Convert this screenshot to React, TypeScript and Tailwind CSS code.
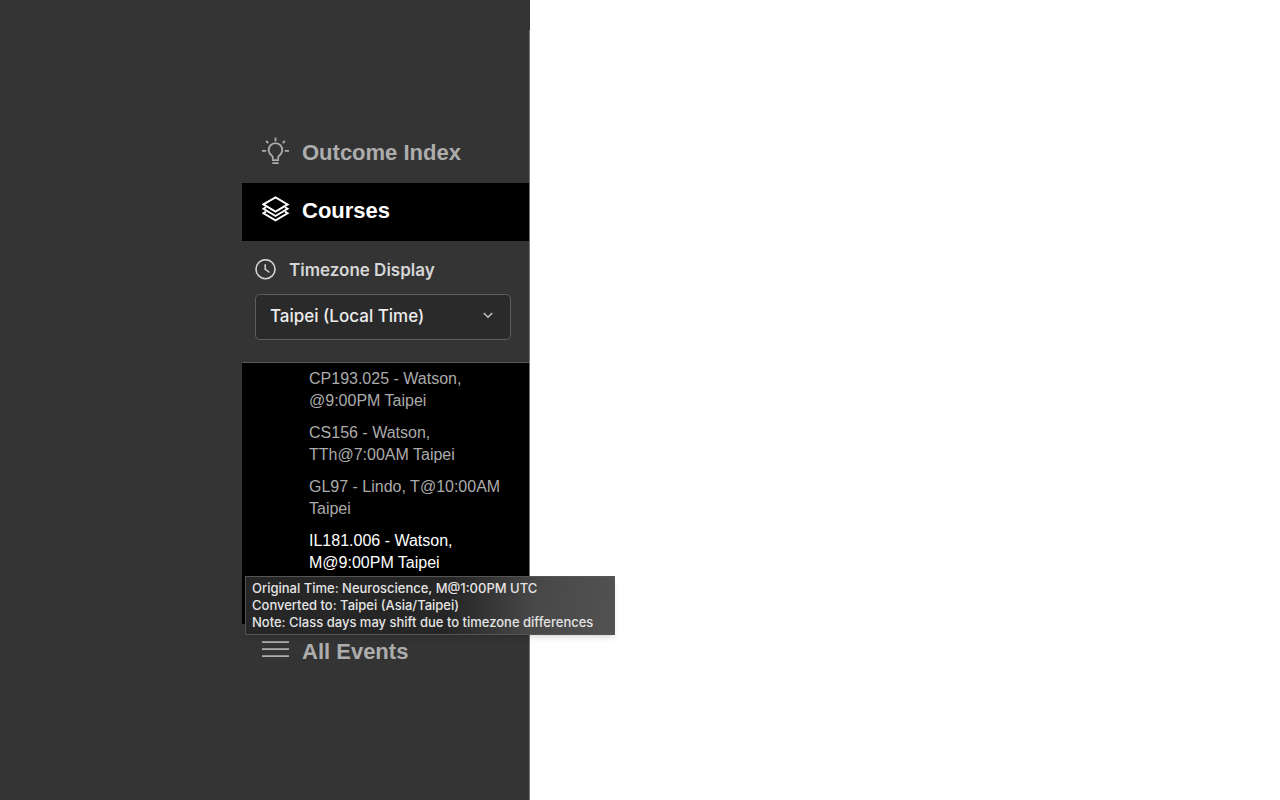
import React from "react";

const courses = [
  { name: "CP193.025 - Watson, @9:00PM Taipei" },
  { name: "CS156 - Watson, TTh@7:00AM Taipei" },
  { name: "GL97 - Lindo, T@10:00AM Taipei" },
  { name: "IL181.006 - Watson, M@9:00PM Taipei", active: true },
];

function BulbIcon() {
  return (
    <svg aria-hidden="true" className="size-7 shrink-0" viewBox="0 0 28 28" fill="none" stroke="currentColor" strokeWidth="1.8">
      <path d="M13.5.6v3.6M4.2 3.8l2 2.4M22.8 3.8l-2 2.4M0 13.8h4.2M22.8 13.8H27" />
      <path d="M10.8 22.4v-2.2c0-.8-.5-1.3-1.2-1.8a6.8 6.8 0 1 1 7.8 0c-.7.5-1.2 1-1.2 1.8v2.2" />
      <path d="M10 23.2h7M10.4 26.2h6.2" />
    </svg>
  );
}

function LayersIcon() {
  return (
    <svg aria-hidden="true" className="size-7 shrink-0" viewBox="0 0 28 28" fill="none" stroke="currentColor" strokeWidth="1.9">
      <path d="M13.5 2.4 25.6 9.4 13.5 16.6 1.4 9.4z" />
      <path d="M4 12.2 1.4 13.8l12.1 7.2 12.1-7.2-2.6-1.6" />
      <path d="M4 16.6 1.4 18.2l12.1 7.2 12.1-7.2-2.6-1.6" />
    </svg>
  );
}

function MenuIcon() {
  return (
    <svg aria-hidden="true" className="size-7 shrink-0" viewBox="0 0 28 28" fill="none" stroke="currentColor" strokeWidth="1.8">
      <path d="M0 6.2h27M0 13.2h27M0 20.2h27" />
    </svg>
  );
}

function ClockIcon() {
  return (
    <svg aria-hidden="true" className="size-[22px] shrink-0" viewBox="0 0 22 22" fill="none" stroke="currentColor" strokeWidth="1.6">
      <circle cx="10.5" cy="10.2" r="9.5" />
      <path d="M10.2 5.8v4.6l3.8 2.6" strokeLinecap="round" strokeWidth="1.5" />
    </svg>
  );
}

function NavLink({ icon, label, active }: { icon: React.ReactNode; label: string; active?: boolean }) {
  return (
    <a
      href="#"
      className={
        active
          ? "flex h-[58px] items-start gap-3 bg-black px-5 pt-3 text-[22px] font-bold leading-8 text-white"
          : "flex h-[58px] items-start gap-3 px-5 pt-3 text-[22px] font-bold leading-8 text-[#adadad]"
      }
    >
      {icon}
      <span>{label}</span>
    </a>
  );
}

export default function App() {
  return (
    <div className="flex min-h-screen bg-white font-['Liberation_Sans',Arial,sans-serif]">
      <aside className="flex w-[530px] shrink-0 flex-col bg-[#343434] pt-[30px]">
        <nav className="grow border-r border-[#777777] pl-[242px] pt-[95px]">
          <NavLink icon={<BulbIcon />} label="Outcome Index" />
          <NavLink icon={<LayersIcon />} label="Courses" active />
          <div className="border-b border-[#5a5a5a] px-[13px] pb-[22px] pt-[18px] font-['Inter',sans-serif]">
            <label htmlFor="timezone" className="flex items-center gap-3 text-[17px] font-semibold leading-[22px] text-[#d6d6d6]">
              <ClockIcon />
              Timezone Display
            </label>
            <div className="relative mr-[5px] mt-[13px]">
              <select
                id="timezone"
                className="block h-[46px] w-full appearance-none rounded-[5px] border border-[#5e5e5e] bg-[#2a2a2a] px-3.5 text-[17px] font-medium text-[#ededed]"
              >
                <option>Taipei (Local Time)</option>
              </select>
              <svg
                aria-hidden="true"
                className="pointer-events-none absolute right-[17px] top-[15px] size-3 text-[#c4c4c4]"
                viewBox="0 0 12 12"
                fill="none"
                stroke="currentColor"
                strokeWidth="1.5"
              >
                <path d="M1.8 4l4.2 4.2L10.2 4" />
              </svg>
            </div>
          </div>
          <div className="relative h-[261px] bg-black pl-[67px] pr-6 pt-[5px]">
            <ul className="flex flex-col gap-2.5 text-base leading-[22px]">
              {courses.map((course) => (
                <li key={course.name}>
                  <a href="#" className={course.active ? "block text-white" : "block text-[#ababab]"}>
                    {course.name}
                  </a>
                </li>
              ))}
            </ul>
            <div
              role="tooltip"
              className="absolute left-[3px] top-[213px] z-10 min-w-[370px] whitespace-nowrap border border-[#555555] bg-linear-[100deg,#262626_55%,#484848_78%,#525252_100%] px-1.5 py-[3px] font-['Inter',sans-serif] text-[13px] font-medium leading-[17px] text-[#e4e4e4] shadow-md"
            >
              <p>Original Time: Neuroscience, M@1:00PM UTC</p>
              <p>Converted to: Taipei (Asia/Taipei)</p>
              <p>Note: Class days may shift due to timezone differences</p>
            </div>
          </div>
          <NavLink icon={<MenuIcon />} label="All Events" />
        </nav>
      </aside>
      <main className="grow" />
    </div>
  );
}
